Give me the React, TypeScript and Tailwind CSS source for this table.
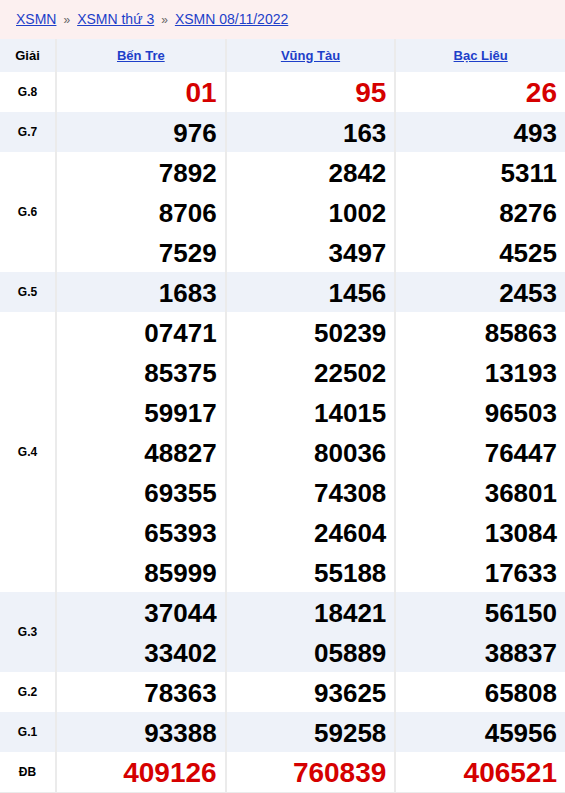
import React from "react";

type Row = {
  label: string;
  values: string[][];
  red?: boolean;
  alt?: boolean;
};

const provinces = ["Bến Tre", "Vũng Tàu", "Bạc Liêu"];

const rows: Row[] = [
  { label: "G.8", values: [["01"], ["95"], ["26"]], red: true },
  { label: "G.7", values: [["976"], ["163"], ["493"]], alt: true },
  {
    label: "G.6",
    values: [
      ["7892", "8706", "7529"],
      ["2842", "1002", "3497"],
      ["5311", "8276", "4525"],
    ],
  },
  { label: "G.5", values: [["1683"], ["1456"], ["2453"]], alt: true },
  {
    label: "G.4",
    values: [
      ["07471", "85375", "59917", "48827", "69355", "65393", "85999"],
      ["50239", "22502", "14015", "80036", "74308", "24604", "55188"],
      ["85863", "13193", "96503", "76447", "36801", "13084", "17633"],
    ],
  },
  {
    label: "G.3",
    values: [
      ["37044", "33402"],
      ["18421", "05889"],
      ["56150", "38837"],
    ],
    alt: true,
  },
  { label: "G.2", values: [["78363"], ["93625"], ["65808"]] },
  { label: "G.1", values: [["93388"], ["59258"], ["45956"]], alt: true },
  { label: "ĐB", values: [["409126"], ["760839"], ["406521"]], red: true },
];

const App = () => {
  return (
    <div className="w-[565px] bg-white font-['Liberation_Sans',Arial,sans-serif]">
      {/* Breadcrumb */}
      <div className="h-[39px] bg-[#fcf0f0] px-4 flex items-center text-[14px] text-[#666]">
        <a href="#" className="text-[#1d3fc9] underline">XSMN</a>
        <span className="mx-[7px] text-[12px]">»</span>
        <a href="#" className="text-[#1d3fc9] underline">XSMN thứ 3</a>
        <span className="mx-[7px] text-[12px]">»</span>
        <a href="#" className="text-[#1d3fc9] underline">XSMN 08/11/2022</a>
      </div>

      <table className="w-full table-fixed border-collapse border-b border-[#ebebeb]">
        <colgroup>
          <col className="w-[56px]" />
          <col />
          <col />
          <col />
        </colgroup>
        <thead>
          <tr className="h-[33px] bg-[#eef2f9]">
            <th className="border-r-2 border-[#ebebeb] text-[13px] font-bold text-black">Giải</th>
            {provinces.map((p, i) => (
              <th
                key={p}
                className={`text-[13px] font-bold ${i < 2 ? "border-r-2 border-[#ebebeb]" : ""}`}
              >
                <a href="#" className="text-[#1d3fc9] underline">{p}</a>
              </th>
            ))}
          </tr>
        </thead>
        <tbody>
          {rows.map((row) => (
            <tr key={row.label} className={row.alt ? "bg-[#eef2f9]" : "bg-white"}>
              <td className="border-r-2 border-[#ebebeb] text-center text-[12px] font-bold text-black">
                {row.label}
              </td>
              {row.values.map((col, i) => (
                <td
                  key={i}
                  className={`pr-[8px] text-right font-bold ${i < 2 ? "border-r-2 border-[#ebebeb]" : ""}`}
                >
                  {col.map((n, j) => (
                    <div
                      key={j}
                      className={
                        row.red
                          ? "h-10 pt-[2px] leading-[38px] text-[28px] text-[#d50000]"
                          : "h-10 pt-[2px] leading-[38px] text-[26px] text-black"
                      }
                    >
                      {n}
                    </div>
                  ))}
                </td>
              ))}
            </tr>
          ))}
        </tbody>
      </table>
    </div>
  );
};

export default App;
